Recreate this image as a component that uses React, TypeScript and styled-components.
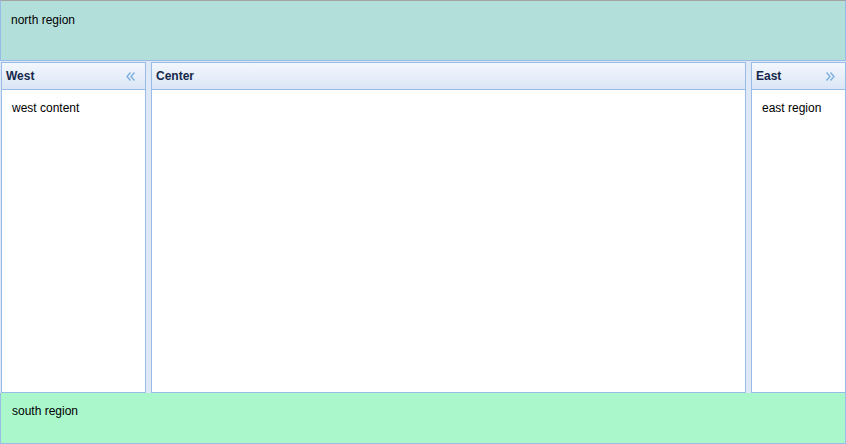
import styled, { createGlobalStyle } from 'styled-components';

const GlobalStyle = createGlobalStyle`
  html, body {
    margin: 0;
    padding: 0;
    background: #dfe8f6;
    font-family: "Liberation Sans", Arial, sans-serif;
    font-size: 12px;
  }
`;

interface RegionProps {
  bg: string;
}

const Viewport = styled.div`
  width: 846px;
  height: 444px;
  display: flex;
  flex-direction: column;
  overflow: hidden;
  background: #dfe8f6;
`;

const Region = styled.div<RegionProps>`
  background: ${({ bg }) => bg};
  border: 1px solid #99bbe8;
  box-sizing: border-box;
  padding: 12px 10px;
  color: #000;
  font-family: "Liberation Sans", Arial, sans-serif;
  font-size: 12px;
`;

const North = styled(Region)`
  height: 61px;
  border-top-color: #a3a3a3;
  flex-shrink: 0;
`;

const South = styled(Region)`
  height: 51px;
  flex-shrink: 0;
  padding: 11px 11px;
  border-top: none;
`;

const Middle = styled.div`
  flex: 1;
  display: flex;
  gap: 5px;
  padding: 1px 0 0 1px;
  min-height: 0;
`;

interface PanelProps {
  width?: number;
  grow?: boolean;
}

const Panel = styled.div<PanelProps>`
  display: flex;
  flex-direction: column;
  box-sizing: border-box;
  border: 1px solid #99bbe8;
  background: #fff;
  ${({ width }) => (width ? `width: ${width}px;` : '')}
  ${({ grow }) => (grow ? 'flex: 1;' : 'flex-shrink: 0;')}
`;

const Header = styled.div`
  height: 27px;
  box-sizing: border-box;
  display: flex;
  align-items: center;
  justify-content: space-between;
  padding: 0 10px 0 4px;
  border-bottom: 1px solid #99bbe8;
  background: linear-gradient(#f3f7fd, #dae6f6);
  font-family: "Liberation Sans", Arial, sans-serif;
  font-weight: bold;
  font-size: 12px;
  color: #15284b;
`;

const Tool = styled.span`
  display: flex;
  align-items: center;
`;

const Body = styled.div`
  flex: 1;
  padding: 11px 10px;
  font-family: "Liberation Sans", Arial, sans-serif;
  font-size: 12px;
  color: #000;
`;

const Chevrons = ({ dir }: { dir: 'left' | 'right' }) => (
  <svg width="9" height="11" viewBox="0 0 9 11">
    <g
      fill="none"
      stroke="#7eaee0"
      strokeWidth="1.4"
      transform={dir === 'right' ? 'translate(9 0) scale(-1 1)' : undefined}
    >
      <path d="M4.5 1.5 L1 5.5 L4.5 9.5" />
      <path d="M8.5 1.5 L5 5.5 L8.5 9.5" />
    </g>
  </svg>
);

export default function App() {
  return (
    <>
      <GlobalStyle />
      <Viewport>
        <North bg="#b3dfdb">north region</North>
        <Middle>
          <Panel width={145}>
            <Header>
              West
              <Tool>
                <Chevrons dir="left" />
              </Tool>
            </Header>
            <Body>west content</Body>
          </Panel>
          <Panel grow>
            <Header>Center</Header>
            <Body />
          </Panel>
          <Panel width={95}>
            <Header>
              East
              <Tool>
                <Chevrons dir="right" />
              </Tool>
            </Header>
            <Body>east region</Body>
          </Panel>
        </Middle>
        <South bg="#aaf7cc">south region</South>
      </Viewport>
    </>
  );
}
